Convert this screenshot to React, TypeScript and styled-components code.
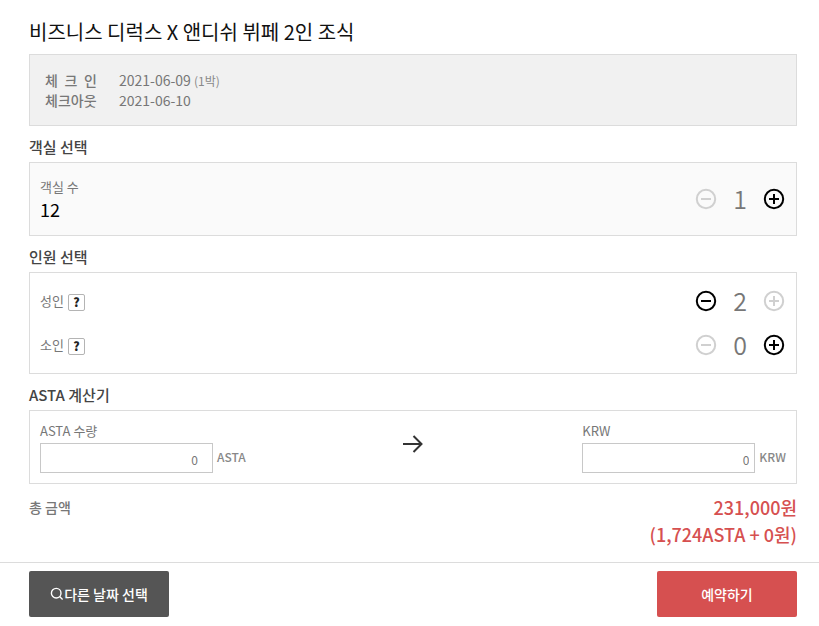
import React, { useState } from "react";
import styled, { createGlobalStyle } from "styled-components";

const GlobalStyle = createGlobalStyle`
  *, *::before, *::after { box-sizing: border-box; }
  body {
    margin: 0;
    background: #fff;
    color: #777;
    font-family: "Noto Sans CJK KR", "Noto Sans", sans-serif;
    font-size: 14px;
    line-height: 20px;
  }
  button, input { font-family: inherit; }
  h1, h2, p, dl, dd { margin: 0; }
`;

const Content = styled.main`
  padding: 18px 22px 14px 29px;
`;

const Title = styled.h1`
  color: #111;
  font-size: 20px;
  font-weight: 400;
  line-height: 28px;
  margin-bottom: 8px;
`;

const Heading = styled.h2`
  padding-top: 6px;
  color: #444;
  font-size: 15px;
  font-weight: 500;
  line-height: 30px;
`;

const Panel = styled.section<{ $tone?: string }>`
  border: 1px solid #dcdcdc;
  background: ${(p) => p.$tone ?? "#fff"};
`;

const Dates = styled.dl`
  padding: 15px;
`;

const DateRow = styled.div`
  display: flex;
  gap: 22px;
`;

const DateLabel = styled.dt`
  display: flex;
  justify-content: space-between;
  width: 52px;
  font-size: 14px;
  font-weight: 500;
`;

const Nights = styled.small`
  color: #8a8a8a;
  font-size: 12px;
  line-height: 12px;
`;

const Row = styled.div<{ $tall?: boolean }>`
  display: flex;
  align-items: center;
  justify-content: space-between;
  height: ${(p) => (p.$tall ? 72 : 44)}px;
  padding: 0 11px 0 10px;
`;

const Guests = styled.div`
  padding: 6px 0;
`;

const Caption = styled.div`
  display: flex;
  align-items: center;
  gap: 4px;
  font-size: 13px;
`;

const RoomsLeft = styled.p`
  color: #000;
  font-size: 18px;
  line-height: 24px;
`;

const HelpButton = styled.button`
  width: 17px;
  height: 17px;
  margin-top: 2px;
  padding: 0;
  border: 1px solid #b4b4b4;
  border-radius: 2px;
  background: #fff;
  color: #222;
  font-size: 12px;
  font-weight: 900;
  line-height: 14px;
`;

const StepperBox = styled.div`
  display: flex;
  align-items: center;
`;

const Count = styled.output`
  width: 46px;
  padding-bottom: 2px;
  text-align: center;
  font-size: 25px;
  font-weight: 350;
  line-height: 32px;
`;

const StepButton = styled.button`
  display: flex;
  padding: 0;
  border: 0;
  background: none;
  color: #000;
  &:disabled { color: #d0d0d0; }
`;

const Calculator = styled.div`
  display: flex;
  justify-content: space-between;
  padding: 10px;
`;

const Arrow = styled.svg`
  margin-top: 13px;
`;

const Field = styled.div`
  display: grid;
  grid-template-columns: 173px auto;
  column-gap: 4px;
`;

const FieldLabel = styled.label`
  grid-column: 1 / -1;
  padding-bottom: 2px;
  font-size: 13px;
  line-height: 20px;
`;

const Amount = styled.input<{ $inset: number }>`
  width: 100%;
  height: 30px;
  border: 1px solid #c8c8c8;
  border-radius: 0;
  background: #fff;
  color: #777;
  text-align: right;
  font-size: 12px;
  padding: 2px ${(p) => p.$inset}px 0 4px;
`;

const Unit = styled.span`
  color: #888;
  font-size: 12px;
  font-weight: 500;
  line-height: 28px;
`;

const Total = styled.div`
  display: flex;
  justify-content: space-between;
  padding-top: 10px;
`;

const TotalLabel = styled.span`
  font-weight: 500;
  line-height: 26px;
`;

const Price = styled.strong`
  color: #d65050;
  font-size: 18px;
  font-weight: 500;
  line-height: 27px;
  text-align: right;
`;

const Footer = styled.footer`
  display: flex;
  justify-content: space-between;
  padding: 8px 22px 8px 29px;
  border-top: 1px solid #dcdcdc;
`;

const ActionButton = styled.button<{ $color: string }>`
  display: flex;
  align-items: center;
  justify-content: center;
  width: 140px;
  height: 46px;
  padding: 0;
  border: 0;
  border-radius: 2px;
  background: ${(p) => p.$color};
  color: #fff;
  font-size: 14px;
  font-weight: 500;
`;

function StepIcon({ plus }: { plus?: boolean }) {
  return (
    <svg width="22" height="22" viewBox="0 0 22 22" fill="none" stroke="currentColor" strokeWidth="2" aria-hidden="true">
      <circle cx="11" cy="11" r="9.2" />
      <path d={plus ? "M6 11h10M11 6v10" : "M6 11h10"} />
    </svg>
  );
}

function Stepper({ name, initial, min, max }: { name: string; initial: number; min: number; max: number }) {
  const [value, setValue] = useState(initial);
  return (
    <StepperBox>
      <StepButton type="button" aria-label={`${name} -`} disabled={value <= min} onClick={() => setValue(value - 1)}>
        <StepIcon />
      </StepButton>
      <Count aria-label={name}>{value}</Count>
      <StepButton type="button" aria-label={`${name} +`} disabled={value >= max} onClick={() => setValue(value + 1)}>
        <StepIcon plus />
      </StepButton>
    </StepperBox>
  );
}

function GuestRow({ name, initial, max }: { name: string; initial: number; max: number }) {
  return (
    <Row>
      <Caption>
        <span>{name}</span>
        <HelpButton type="button">?</HelpButton>
      </Caption>
      <Stepper name={name} initial={initial} min={0} max={max} />
    </Row>
  );
}

function AmountField({ id, label, unit, inset }: { id: string; label: string; unit: string; inset: number }) {
  return (
    <Field>
      <FieldLabel htmlFor={id}>{label}</FieldLabel>
      <Amount id={id} defaultValue="0" inputMode="numeric" $inset={inset} />
      <Unit>{unit}</Unit>
    </Field>
  );
}

export default function App() {
  return (
    <>
      <GlobalStyle />
      <Content>
        <Title>비즈니스 디럭스 X 앤디쉬 뷔페 2인 조식</Title>
        <Panel $tone="#f1f1f1">
          <Dates>
            <DateRow>
              <DateLabel><span>체</span> <span>크</span> <span>인</span></DateLabel>
              <dd>2021-06-09 <Nights>(1박)</Nights></dd>
            </DateRow>
            <DateRow>
              <DateLabel>체크아웃</DateLabel>
              <dd>2021-06-10</dd>
            </DateRow>
          </Dates>
        </Panel>

        <Heading>객실 선택</Heading>
        <Panel $tone="#fafafa">
          <Row $tall>
            <div>
              <Caption>객실 수</Caption>
              <RoomsLeft>12</RoomsLeft>
            </div>
            <Stepper name="객실 수" initial={1} min={1} max={12} />
          </Row>
        </Panel>

        <Heading>인원 선택</Heading>
        <Panel>
          <Guests>
            <GuestRow name="성인" initial={2} max={2} />
            <GuestRow name="소인" initial={0} max={2} />
          </Guests>
        </Panel>

        <Heading>ASTA 계산기</Heading>
        <Panel>
          <Calculator>
            <AmountField id="asta" label="ASTA 수량" unit="ASTA" inset={14} />
            <Arrow width="24" height="20" viewBox="0 0 24 20" fill="none" stroke="#333" strokeWidth="2" aria-hidden="true">
              <path d="M1 10h19M11.5 2l8 8-8 8" />
            </Arrow>
            <AmountField id="krw" label="KRW" unit="KRW" inset={5} />
          </Calculator>
        </Panel>

        <Total>
          <TotalLabel>총 금액</TotalLabel>
          <Price>
            231,000원
            <br />
            (1,724ASTA + 0원)
          </Price>
        </Total>
      </Content>
      <Footer>
        <ActionButton type="button" $color="#555">
          <svg width="14" height="14" viewBox="0 0 14 14" fill="none" stroke="currentColor" strokeWidth="1.4" aria-hidden="true">
            <circle cx="6.2" cy="6.2" r="4.8" />
            <path d="M9.6 9.6l3 3" />
          </svg>
          다른 날짜 선택
        </ActionButton>
        <ActionButton type="button" $color="#d65050">예약하기</ActionButton>
      </Footer>
    </>
  );
}
